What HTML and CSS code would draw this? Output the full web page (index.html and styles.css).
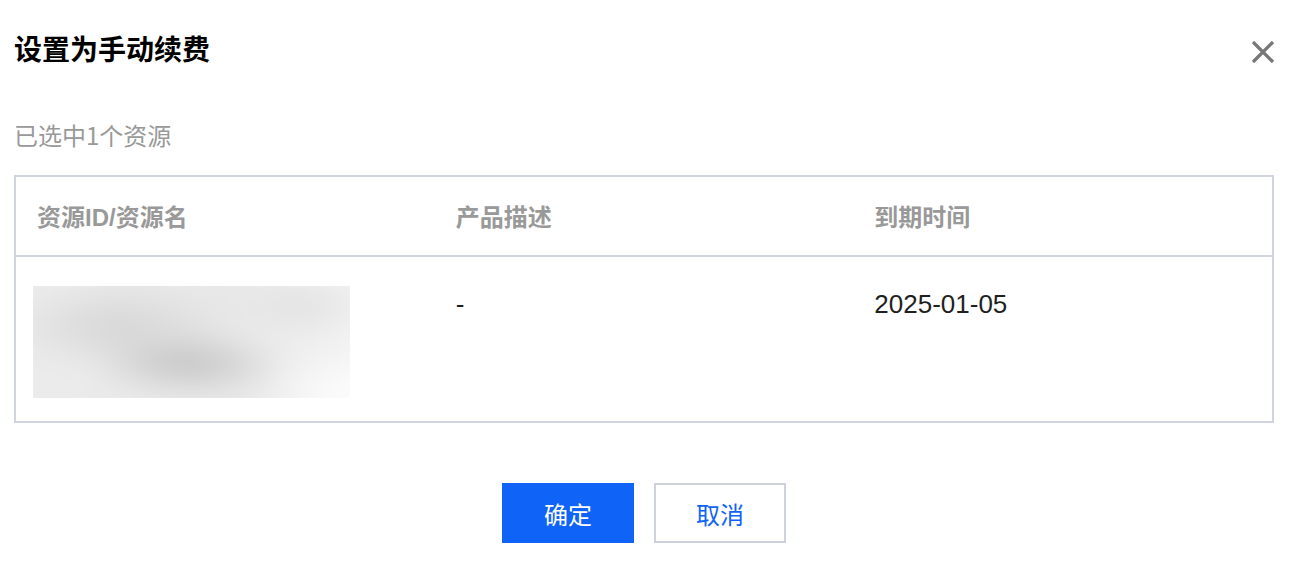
FILE: index.html
```html
<!DOCTYPE html>
<html lang="zh-CN">
<head>
<meta charset="utf-8">
<title>设置为手动续费</title>
<link rel="stylesheet" href="styles.css">
</head>
<body>
<div class="dialog">
  <div class="dialog-header">
    <h1 class="dialog-title">设置为手动续费</h1>
    <button class="close-btn" type="button" aria-label="关闭">
      <svg width="24" height="24" viewBox="0 0 24 24"><path d="M2 2 L22 22 M22 2 L2 22" stroke="#777" stroke-width="3.2" fill="none"/></svg>
    </button>
  </div>
  <p class="selected-info">已选中1个资源</p>
  <table class="res-table">
    <thead>
      <tr>
        <th>资源ID/资源名</th>
        <th>产品描述</th>
        <th>到期时间</th>
      </tr>
    </thead>
    <tbody>
      <tr>
        <td><div class="blurred"><div class="blurred-inner"></div></div></td>
        <td>-</td>
        <td>2025-01-05</td>
      </tr>
    </tbody>
  </table>
  <div class="dialog-footer">
    <button class="btn btn-primary" type="button">确定</button>
    <button class="btn btn-default" type="button">取消</button>
  </div>
</div>
</body>
</html>
```
FILE: styles.css
```css
html, body {
  margin: 0;
  padding: 0;
  background: #fff;
}
body {
  font-family: "Liberation Sans", "Noto Sans CJK SC", sans-serif;
  color: #222;
}
.dialog {
  padding: 28px 39px 0 14px;
}
.dialog-header {
  display: flex;
  justify-content: space-between;
  align-items: flex-start;
}
.dialog-title {
  margin: 0;
  font-size: 28px;
  line-height: 40px;
  font-weight: 700;
  color: #000;
  font-family: "Noto Sans CJK SC", sans-serif;
}
.close-btn {
  margin-top: 12px;
  margin-right: -1px;
  padding: 0;
  border: 0;
  background: none;
  width: 24px;
  height: 24px;
  display: block;
  cursor: pointer;
}
.close-btn svg { display: block; }
.selected-info {
  margin: 51px 0 0;
  font-size: 24px;
  line-height: 32px;
  color: #999;
  font-family: "Noto Sans CJK SC", sans-serif;
}
.res-table {
  margin-top: 24px;
  width: 100%;
  table-layout: fixed;
  border-collapse: separate;
  border-spacing: 0;
  border: 2px solid #cfd4de;
}
.res-table th {
  text-align: left;
  font-size: 24px;
  line-height: 32px;
  font-weight: 700;
  color: #999;
  padding: 25px 21px 21px;
  border-bottom: 2px solid #cfd4de;
}
.res-table td {
  vertical-align: top;
  font-size: 26px;
  line-height: 40px;
  color: #1f1f1f;
  padding: 27px 21px 23px;
}
.blurred {
  margin: 2px 0 0 -4px;
  width: 317px;
  height: 112px;
  overflow: hidden;
  position: relative;
  background: #f2f2f2;
}
.blurred-inner {
  position: absolute;
  inset: -30px;
  filter: blur(14px);
  background:
    radial-gradient(ellipse 100px 28px at 185px 108px, #bdbdbd 0%, rgba(189,189,189,0) 100%),
    radial-gradient(ellipse 120px 42px at 115px 70px, #d4d4d4 0%, rgba(212,212,212,0) 100%),
    radial-gradient(ellipse 80px 30px at 300px 50px, #e0e0e0 0%, rgba(224,224,224,0) 100%),
    radial-gradient(ellipse 90px 45px at 345px 140px, #ffffff 0%, rgba(255,255,255,0) 100%),
    linear-gradient(90deg, #ececec 0%, #e8e8e8 60%, #f5f5f5 100%);
}
.dialog-footer {
  margin-top: 60px;
  display: flex;
  justify-content: center;
  gap: 20px;
}
.btn {
  width: 132px;
  height: 60px;
  font-size: 24px;
  font-family: "Noto Sans CJK SC", sans-serif;
  cursor: pointer;
  padding: 0;
  box-sizing: border-box;
}
.btn-primary {
  background: #0f63f6;
  border: 0;
  color: #fff;
}
.btn-default {
  background: #fff;
  border: 2px solid #cdd2dc;
  color: #0f63f6;
}
```
